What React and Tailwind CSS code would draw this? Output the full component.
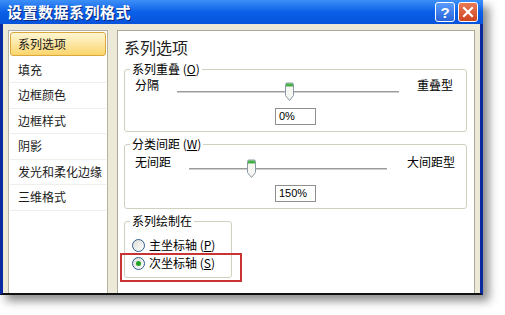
import React from 'react'

const navItems = ['系列选项', '填充', '边框颜色', '边框样式', '阴影', '发光和柔化边缘', '三维格式']

const Thumb = () => (
    <svg width="11" height="20" viewBox="0 0 11 20">
        <path d="M1.5 2.5 Q1.5 1 3 1 H8 Q9.5 1 9.5 2.5 V13.5 L5.5 18.5 L1.5 13.5 Z" fill="#f6f6f2" stroke="#8b9aa6" />
        <path d="M2 2.5 Q2 1.5 3 1.5 H8 Q9 1.5 9 2.5 V4.5 H2 Z" fill="#45b045" />
    </svg>
)

const Slider = ({ width, pos }) => (
    <div className={`relative h-full ${width}`}>
        <div className="absolute left-0 right-0 top-[15px] h-[3px] border-t border-t-[#9b9b9b] border-b border-b-[#ffffff] bg-[#cfcfcf]" />
        <div className={`absolute top-[6px] ${pos}`}>
            <Thumb />
        </div>
    </div>
)

const Radio = ({ checked }) => (
    <div className="w-[13px] h-[13px] rounded-full border border-[#2f5f8f] bg-gradient-to-br from-[#dcdcd6] to-[#ffffff] flex items-center justify-center">
        {checked && <div className="w-[5px] h-[5px] rounded-full bg-[#21a121]" />}
    </div>
)

const App = () => {
    return (
        <div className="w-[505px] h-[315px] bg-white font-['Noto_Sans_CJK_SC','Liberation_Sans',sans-serif] text-black overflow-hidden">
            <div className="w-[483px] h-[295px] flex flex-col bg-[#ece9d8] border-x-[3px] border-x-[#0b2aa0] border-b-2 border-b-[#111111] shadow-[6px_6px_9px_rgba(0,0,0,0.45)]">
                {/* title bar */}
                <div className="h-[24px] -mx-[3px] flex items-center justify-between pl-[7px] pr-[5px] bg-gradient-to-b from-[#3d8ff7] via-[#0a5fe8] to-[#0753db]">
                    <span className="text-white font-bold text-[15px] leading-[18px] tracking-[0.5px] [text-shadow:1px_1px_0_#0a2a80]">设置数据系列格式</span>
                    <div className="flex gap-[3px]">
                        <div className="w-[20px] h-[20px] rounded-[3px] border border-white bg-gradient-to-b from-[#5b9bff] to-[#2a63d8] flex items-center justify-center text-white font-bold text-[15px] leading-none font-['Liberation_Sans',sans-serif]">?</div>
                        <div className="w-[20px] h-[20px] rounded-[3px] border border-white bg-gradient-to-b from-[#e77a55] to-[#cf431e] flex items-center justify-center">
                            <svg width="12" height="12" viewBox="0 0 12 12">
                                <path d="M2 2 L10 10 M10 2 L2 10" stroke="white" strokeWidth="2.2" strokeLinecap="square" />
                            </svg>
                        </div>
                    </div>
                </div>

                {/* body */}
                <div className="flex-1 flex pt-[6px] pl-[5px] pr-[5px] gap-[9px] min-h-0">
                    {/* left nav */}
                    <div className="w-[100px] bg-white border border-b-0 border-[#b5b2a4] pt-[1px] px-[1px]">
                        {navItems.map((item, i) => (
                            <div
                                key={item}
                                className={
                                    i === 0
                                        ? 'h-[24px] mb-[1.5px] flex items-center pl-[7px] text-[12px] leading-[14px] text-[#1a1a1a] rounded-[3px] border border-[#d9a73a] bg-gradient-to-b from-[#fff6d2] to-[#fbd56a]'
                                        : 'h-[25.5px] flex items-center pl-[8px] text-[12px] leading-[14px] text-[#1a1a1a] border-b border-[#f0efea]'
                                }
                            >
                                {item}
                            </div>
                        ))}
                    </div>

                    {/* right content */}
                    <div className="relative w-[358px] bg-white border border-b-0 border-[#aca899] pt-[6px] pl-[6px]">
                        <div className="text-[16px] leading-[20px] text-[#222]">系列选项</div>

                        <fieldset className="mt-[5px] w-[343px] border border-[#d0d0bf] rounded-[3px] pl-[5px] pb-[6px]">
                            <legend className="px-[2px] text-[12px] leading-[14px]">系列重叠 (<u>O</u>)</legend>
                            <div className="flex h-[26px] pl-[5px]">
                                <div className="w-[42px] mt-[2px] text-[12px] leading-[14px]">分隔</div>
                                <Slider width="w-[222px]" pos="left-[107px]" />
                                <div className="ml-[18px] mt-[2px] text-[12px] leading-[14px]">重叠型</div>
                            </div>
                            <div className="ml-[145px] mt-[6px] w-[41px] h-[17px] border border-[#8f8f8f] flex items-center pl-[3px] text-[11px] font-['Liberation_Sans',sans-serif]">0%</div>
                        </fieldset>

                        <fieldset className="mt-[5px] w-[343px] border border-[#d0d0bf] rounded-[3px] pl-[5px] pb-[6px]">
                            <legend className="px-[2px] text-[12px] leading-[14px]">分类间距 (<u>W</u>)</legend>
                            <div className="flex h-[28px] pl-[5px] pt-[2px]">
                                <div className="w-[54px] mt-[2px] text-[12px] leading-[14px]">无间距</div>
                                <Slider width="w-[198px]" pos="left-[57px]" />
                                <div className="ml-[20px] mt-[2px] text-[12px] leading-[14px]">大间距型</div>
                            </div>
                            <div className="ml-[145px] mt-[6px] w-[41px] h-[17px] border border-[#8f8f8f] flex items-center pl-[3px] text-[11px] font-['Liberation_Sans',sans-serif]">150%</div>
                        </fieldset>

                        <fieldset className="mt-[5px] w-[108px] border border-[#d0d0bf] rounded-[3px] pl-[5px] pb-[5px]">
                            <legend className="px-[2px] text-[12px] leading-[14px]">系列绘制在</legend>
                            <div className="mt-[8px] h-[18px] flex items-center gap-[4px] pl-[2px]">
                                <Radio />
                                <span className="text-[12px] leading-[14px]">主坐标轴 (<u>P</u>)</span>
                            </div>
                            <div className="h-[18px] flex items-center gap-[4px] pl-[2px]">
                                <Radio checked />
                                <span className="text-[12px] leading-[14px]">次坐标轴 (<u>S</u>)</span>
                            </div>
                        </fieldset>

                        {/* annotation box */}
                        <div className="absolute left-[2px] top-[222px] w-[122px] h-[29px] border-2 border-[#c93333]" />
                    </div>
                </div>
            </div>
        </div>
    )
}

export default App
